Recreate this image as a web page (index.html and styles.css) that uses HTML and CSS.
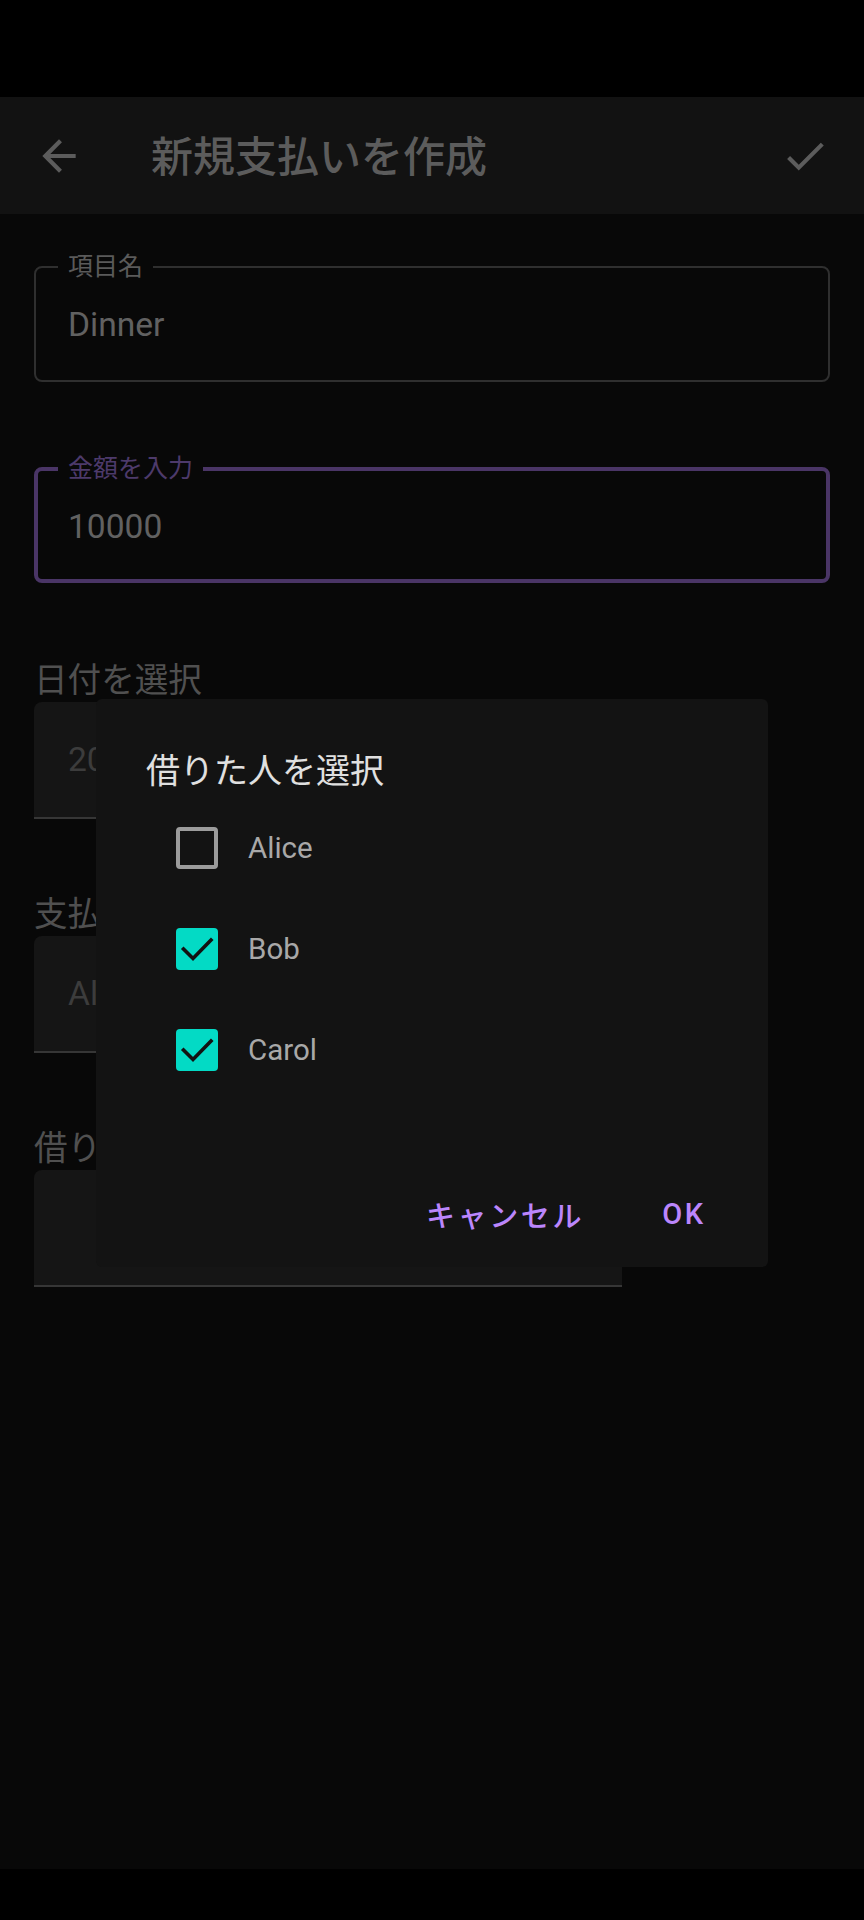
FILE: index.html
```html
<!DOCTYPE html>
<html lang="ja">
<head>
<meta charset="utf-8">
<title>新規支払いを作成</title>
<link rel="stylesheet" href="styles.css">
</head>
<body>
<div class="screen">
  <div class="status-bar"></div>
  <header class="app-bar">
    <span class="icon-btn">
      <svg viewBox="0 0 24 24" width="50" height="50"><path d="M20 11H7.83l5.59-5.59L12 4l-8 8 8 8 1.41-1.41L7.83 13H20v-2z"/></svg>
    </span>
    <h1 class="app-title">新規支払いを作成</h1>
    <span class="icon-btn">
      <svg viewBox="0 0 24 24" width="50" height="50"><path d="M9 16.17L4.83 12l-1.42 1.41L9 19 21 7l-1.41-1.41z"/></svg>
    </span>
  </header>
  <main class="content">
    <div class="outlined">
      <span class="float-label">項目名</span>
      <span class="value">Dinner</span>
    </div>
    <div class="outlined focused">
      <span class="float-label">金額を入力</span>
      <span class="value">10000</span>
    </div>
    <section class="section first">
      <div class="section-label">日付を選択</div>
      <div class="filled"><span class="dim-value">20</span></div>
    </section>
    <section class="section">
      <div class="section-label">支払った人を選択</div>
      <div class="filled"><span class="dim-value">Al</span></div>
    </section>
    <section class="section">
      <div class="section-label">借りた人を選択</div>
      <div class="filled"></div>
    </section>
  </main>
  <div class="nav-bar"></div>

  <div class="dialog">
    <h2 class="dialog-title">借りた人を選択</h2>
    <ul class="choice-list">
      <li class="choice">
        <span class="box"></span>
        <span class="choice-label">Alice</span>
      </li>
      <li class="choice">
        <span class="box checked"><svg viewBox="0 0 42 42" width="42" height="42"><polyline points="7.5,21 17,30.5 35,12" /></svg></span>
        <span class="choice-label">Bob</span>
      </li>
      <li class="choice">
        <span class="box checked"><svg viewBox="0 0 42 42" width="42" height="42"><polyline points="7.5,21 17,30.5 35,12" /></svg></span>
        <span class="choice-label">Carol</span>
      </li>
    </ul>
    <div class="dialog-actions">
      <span class="text-btn">キャンセル</span>
      <span class="text-btn">OK</span>
    </div>
  </div>
</div>
</body>
</html>
```
FILE: styles.css
```css
* { box-sizing: border-box; }
html, body { margin: 0; padding: 0; background: #080808; }
body {
  font-family: Roboto, "Noto Sans CJK JP", sans-serif;
}
.screen {
  position: relative;
  width: 864px;
  height: 1920px;
  display: flex;
  flex-direction: column;
  background: #080808;
  overflow: hidden;
}
.status-bar { height: 97px; background: #000; flex: none; }
.app-bar {
  height: 117px;
  flex: none;
  background: #121212;
  display: flex;
  align-items: center;
  padding: 0 34px;
}
.icon-btn { width: 50px; height: 50px; display: flex; fill: #5c5c5c; }
.icon-btn svg { display: block; }
.app-title {
  flex: 1;
  margin: 4px 0 0 67px;
  font-size: 42px;
  font-weight: 500;
  color: #5c5c5c;
  line-height: 50px;
  letter-spacing: 0;
}
.content {
  flex: 1;
  padding: 52px 34px 0;
  display: flex;
  flex-direction: column;
}
.outlined {
  position: relative;
  height: 116px;
  border: 2px solid #2f2f2f;
  border-radius: 8px;
  padding: 2px 0 0 32px;
  display: flex;
  align-items: center;
}
.outlined.focused {
  margin-top: 85px;
  border: 4px solid #4a3566;
  padding: 4px 0 0 30px;
}
.float-label {
  position: absolute;
  top: -14px;
  left: 22px;
  padding: 0 10px;
  background: #080808;
  font-size: 25px;
  line-height: 25px;
  color: #5a5a5a;
}
.focused .float-label { top: -15px; left: 20px; color: #4d3a6b; }
.value { font-size: 33.6px; color: #616161; line-height: 40px; }
.section { margin-top: 76px; display: flex; flex-direction: column; }
.section.first { margin-top: 78px; }
.section-label {
  font-size: 33.6px;
  line-height: 40px;
  color: #505050;
  white-space: nowrap;
  margin-bottom: 1px;
}
.filled {
  width: 588px;
  height: 117px;
  background: #151515;
  border-bottom: 2px solid #363636;
  border-radius: 8px 8px 0 0;
  padding-left: 34px;
  display: flex;
  align-items: center;
}
.dim-value { font-size: 33.6px; color: #3c3c3c; }
.nav-bar { height: 51px; background: #000; flex: none; }

.dialog {
  position: absolute;
  left: 96px;
  top: 699px;
  width: 672px;
  height: 568px;
  background: #131313;
  border-radius: 6px;
  display: flex;
  flex-direction: column;
}
.dialog-title {
  margin: 0;
  padding: 52px 50px 0;
  font-size: 34px;
  line-height: 40px;
  font-weight: 400;
  color: #e0e0e0;
}
.choice-list { list-style: none; margin: 6px 0 0; padding: 0; }
.choice {
  height: 101px;
  display: flex;
  align-items: center;
  padding-left: 80px;
}
.box {
  width: 42px;
  height: 42px;
  border: 4px solid #9c9c9c;
  border-radius: 4px;
  flex: none;
}
.box.checked { border: none; background: #03dac5; }
.box svg { display: block; fill: none; stroke: #121212; stroke-width: 3.6; stroke-linecap: square; }
.choice-label { margin-left: 30px; font-size: 29.5px; color: #a8a8a8; }
.dialog-actions {
  margin-top: auto;
  display: flex;
  justify-content: flex-end;
  gap: 16px;
  padding: 0 17px 15px;
}
.text-btn {
  height: 76px;
  min-width: 134px;
  padding: 0 17px;
  display: flex;
  align-items: center;
  justify-content: center;
  font-size: 29px;
  font-weight: 500;
  letter-spacing: 2.6px;
  color: #bb86fc;
}
```
